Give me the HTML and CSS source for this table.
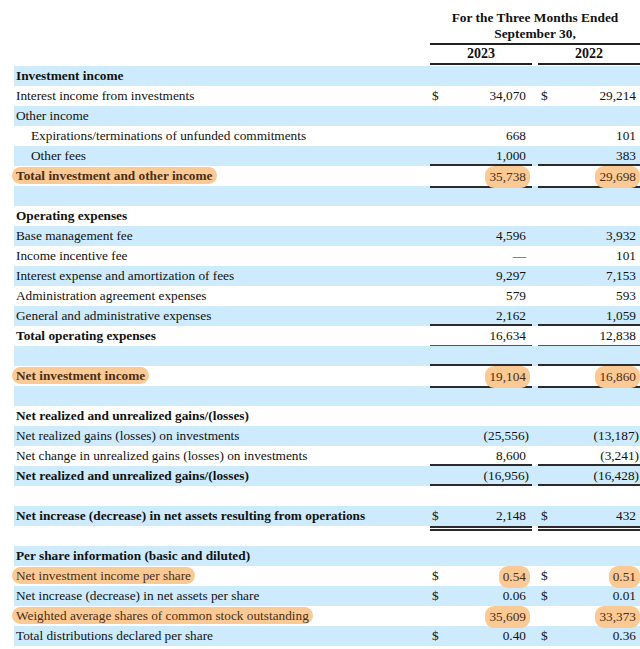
FILE: index.html
```html
<!DOCTYPE html>
<html>
<head>
<meta charset="utf-8">
<link rel="stylesheet" href="styles.css">
</head>
<body>
<div class="sheet">
  <div class="head">
    <div class="head-title">For the Three Months Ended<br>September 30,</div>
  </div>
  <div class="years">
    <div></div>
    <div class="year">2023</div>
    <div></div>
    <div class="year">2022</div>
  </div>

  <div class="row blue"><div class="label bold">Investment income</div></div>
  <div class="row"><div class="label">Interest income from investments</div><div class="amt a1"><span>$</span><span>34,070</span></div><div></div><div class="amt a2"><span>$</span><span>29,214</span></div></div>
  <div class="row blue"><div class="label">Other income</div></div>
  <div class="row"><div class="label indent">Expirations/terminations of unfunded commitments</div><div class="amt a1"><span></span><span>668</span></div><div></div><div class="amt a2"><span></span><span>101</span></div></div>
  <div class="row blue"><div class="label indent">Other fees</div><div class="amt a1 lb"><span></span><span>1,000</span></div><div></div><div class="amt a2 lb"><span></span><span>383</span></div></div>
  <div class="row"><div class="label bold"><span class="hl">Total investment and other income</span></div><div class="amt a1 lb"><span></span><span class="hl">35,738</span></div><div></div><div class="amt a2 lb"><span></span><span class="hl">29,698</span></div></div>
  <div class="row blue"></div>
  <div class="row"><div class="label bold">Operating expenses</div></div>
  <div class="row blue"><div class="label">Base management fee</div><div class="amt a1"><span></span><span>4,596</span></div><div></div><div class="amt a2"><span></span><span>3,932</span></div></div>
  <div class="row"><div class="label">Income incentive fee</div><div class="amt a1"><span></span><span>—</span></div><div></div><div class="amt a2"><span></span><span>101</span></div></div>
  <div class="row blue"><div class="label">Interest expense and amortization of fees</div><div class="amt a1"><span></span><span>9,297</span></div><div></div><div class="amt a2"><span></span><span>7,153</span></div></div>
  <div class="row"><div class="label">Administration agreement expenses</div><div class="amt a1"><span></span><span>579</span></div><div></div><div class="amt a2"><span></span><span>593</span></div></div>
  <div class="row blue"><div class="label">General and administrative expenses</div><div class="amt a1 lb"><span></span><span>2,162</span></div><div></div><div class="amt a2 lb"><span></span><span>1,059</span></div></div>
  <div class="row"><div class="label bold">Total operating expenses</div><div class="amt a1 lt"><span></span><span>16,634</span></div><div></div><div class="amt a2 lt"><span></span><span>12,838</span></div></div>
  <div class="row blue"><div></div><div class="amt lb"></div><div></div><div class="amt lb"></div></div>
  <div class="row"><div class="label bold"><span class="hl">Net investment income</span></div><div class="amt a1 lb"><span></span><span class="hl">19,104</span></div><div></div><div class="amt a2 lb"><span></span><span class="hl">16,860</span></div></div>
  <div class="row blue"></div>
  <div class="row"><div class="label bold">Net realized and unrealized gains/(losses)</div></div>
  <div class="row blue"><div class="label">Net realized gains (losses) on investments</div><div class="amt a1"><span></span><span class="neg">(25,556)</span></div><div></div><div class="amt a2"><span></span><span class="neg">(13,187)</span></div></div>
  <div class="row"><div class="label">Net change in unrealized gains (losses) on investments</div><div class="amt a1 lb"><span></span><span>8,600</span></div><div></div><div class="amt a2 lb"><span></span><span class="neg">(3,241)</span></div></div>
  <div class="row blue"><div class="label bold">Net realized and unrealized gains/(losses)</div><div class="amt a1 lb"><span></span><span class="neg">(16,956)</span></div><div></div><div class="amt a2 lb"><span></span><span class="neg">(16,428)</span></div></div>
  <div class="row"></div>
  <div class="row blue"><div class="label bold">Net increase (decrease) in net assets resulting from operations</div><div class="amt a1"><span>$</span><span>2,148</span></div><div></div><div class="amt a2"><span>$</span><span>432</span></div></div>
  <div class="row"><div></div><div class="amt dbl"></div><div></div><div class="amt dbl"></div></div>
  <div class="row blue"><div class="label bold">Per share information (basic and diluted)</div></div>
  <div class="row"><div class="label"><span class="hl">Net investment income per share</span></div><div class="amt a1"><span>$</span><span class="hl">0.54</span></div><div></div><div class="amt a2"><span>$</span><span class="hl">0.51</span></div></div>
  <div class="row blue"><div class="label">Net increase (decrease) in net assets per share</div><div class="amt a1"><span>$</span><span>0.06</span></div><div></div><div class="amt a2"><span>$</span><span>0.01</span></div></div>
  <div class="row"><div class="label"><span class="hl">Weighted average shares of common stock outstanding</span></div><div class="amt a1"><span></span><span class="hl">35,609</span></div><div></div><div class="amt a2"><span></span><span class="hl">33,373</span></div></div>
  <div class="row blue"><div class="label">Total distributions declared per share</div><div class="amt a1"><span>$</span><span>0.40</span></div><div></div><div class="amt a2"><span>$</span><span>0.36</span></div></div>
</div>
</body>
</html>
```
FILE: styles.css
```css
html, body {
  margin: 0;
  padding: 0;
  background: #ffffff;
}
body {
  font-family: "Liberation Serif", "Times New Roman", serif;
  font-size: 13.3px;
  color: #111;
}
.sheet {
  padding: 10px 0 0 14px;
  width: 626px;
}
.head {
  display: grid;
  grid-template-columns: 416px 210px;
}
.head-title {
  grid-column: 2;
  text-align: center;
  font-weight: bold;
  font-size: 13.4px;
  line-height: 16px;
  padding-bottom: 1px;
  border-bottom: 2px solid #222;
}
.years {
  display: grid;
  grid-template-columns: 416px 102px 6px 102px;
  margin-bottom: 1px;
}
.year {
  text-align: center;
  font-weight: bold;
  font-size: 14px;
  line-height: 18px;
  border-bottom: 2px solid #222;
}
.row {
  display: grid;
  grid-template-columns: 416px 102px 6px 102px;
  height: 20px;
  line-height: 20px;
  align-items: stretch;
}
.row.blue {
  background: #cdebfc;
}
.label {
  padding-left: 2px;
  white-space: nowrap;
}
.label.indent {
  padding-left: 17px;
}
.bold {
  font-weight: bold;
}
.amt {
  display: flex;
  justify-content: space-between;
  white-space: nowrap;
}
.a1 {
  padding: 0 6px 0 2px;
}
.a2 {
  padding: 0 4px 0 3px;
}
.neg {
  margin-right: -3px;
}
.lb {
  box-shadow: inset 0 -2px 0 #2b2b2b;
}
.lt {
  box-shadow: inset 0 -1px 0 #555;
}
.dbl {
  background: linear-gradient(#2b2b2b 0 2px, #ffffff 2px 3px, #2b2b2b 3px 5px, transparent 5px);
}
.hl {
  background: #fbc994;
  color: #4a2f17;
  border-radius: 9px;
  padding: 1px 4px;
  margin: 0 -4px;
}
.label .hl {
  margin-left: -4px;
}
```
